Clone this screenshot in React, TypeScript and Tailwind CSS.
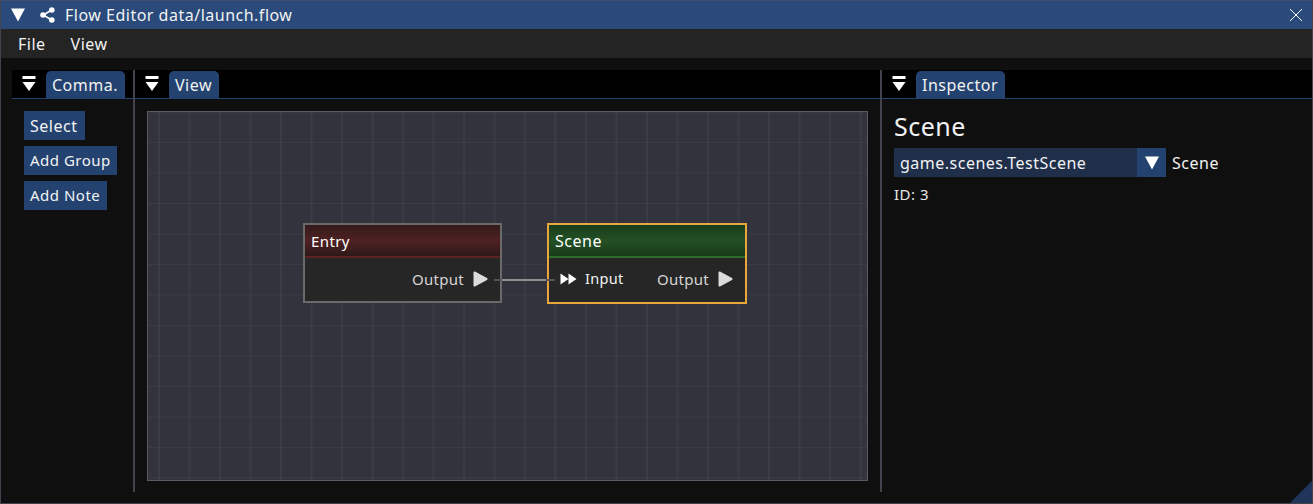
import React from "react";

const Tri = ({ className = "" }: { className?: string }) => (
  <svg width="16" height="14" viewBox="0 0 16 14" className={className}>
    <path d="M1 0.5 L15 0.5 L8 13.5 Z" fill="#fff" />
  </svg>
);

const DockMenu = () => (
  <svg width="14" height="16" viewBox="0 0 14 16" className="shrink-0">
    <rect x="0.5" y="0" width="13" height="3" fill="#fff" />
    <path d="M0.5 6 L13.5 6 L7 15 Z" fill="#fff" />
  </svg>
);

const Play = () => (
  <svg width="15" height="16" viewBox="0 0 15 16">
    <path d="M1.5 1.5 L13.5 8 L1.5 14.5 Z" fill="#dcdcdc" stroke="#dcdcdc" strokeWidth="2" strokeLinejoin="round" />
  </svg>
);

const DoublePlay = () => (
  <svg width="17" height="12" viewBox="0 0 17 12">
    <path d="M0.5 0.5 L8.5 6 L0.5 11.5 Z M8.5 0.5 L16.5 6 L8.5 11.5 Z" fill="#fff" />
  </svg>
);

const Share = () => (
  <svg width="15" height="16" viewBox="0 0 15 16">
    <path d="M11.5 3 L3.5 8 L11.5 13" stroke="#fff" strokeWidth="1.6" fill="none" />
    <circle cx="11.8" cy="3" r="2.8" fill="#fff" />
    <circle cx="3" cy="8" r="2.8" fill="#fff" />
    <circle cx="11.8" cy="13" r="2.8" fill="#fff" />
  </svg>
);

const Tab = ({ label }: { label: string }) => (
  <div className="flex h-[28px] items-center gap-[10px] pl-[10px]">
    <DockMenu />
    <div className="flex h-[27px] items-center rounded-t-[5px] bg-[#23426f] pl-[6px] pr-[7px] pt-[1px] text-[#f2f2f2]">
      {label}
    </div>
  </div>
);

const Panel = ({ label, className, children }: { label: string; className: string; children: React.ReactNode }) => (
  <div className={className}>
    <div className="border-b border-[#23426f] bg-black">
      <Tab label={label} />
    </div>
    {children}
  </div>
);

const Splitter = () => <div className="mb-[11px] mt-[12px] w-[2px] shrink-0 bg-[#43434d]" />;

const CmdButton = ({ label, className = "" }: { label: string; className?: string }) => (
  <div className={`flex h-[29px] items-center bg-[#23426f] pl-[6px] text-[#f2f2f2] ${className}`}>{label}</div>
);

const Row = ({ left }: { left?: boolean }) => (
  <div className="flex h-[42px] items-center justify-between pl-[11px] pr-[12px] text-[15px] tracking-[0.3px] text-[#d4d4d4]">
    {left ? (
      <div className="flex items-center gap-[8px] text-[#f2f2f2]">
        <DoublePlay />
        <span className="text-[14.5px]">Input</span>
      </div>
    ) : (
      <span />
    )}
    <div className="flex items-center gap-[9px]">
      <span>Output</span>
      <Play />
    </div>
  </div>
);

export default function App() {
  return (
    <div className="relative flex h-[504px] w-[1313px] flex-col overflow-hidden border border-[#43434d] border-t-[#3f4d6e] bg-[#0f0f0f] font-['Noto_Sans',sans-serif] text-[16px] tracking-[0.5px] text-[#f2f2f2]">
      <div className="flex h-[28px] shrink-0 items-center bg-[#294a7a] pl-[9px] pr-[8px]">
        <Tri />
        <div className="ml-[14px]">
          <Share />
        </div>
        <span className="ml-[10px]">Flow Editor data/launch.flow</span>
        <svg width="14" height="14" viewBox="0 0 14 14" className="ml-auto mr-[1px]">
          <path d="M1 1 L13 13 M13 1 L1 13" stroke="#fff" strokeWidth="1" />
        </svg>
      </div>
      <div className="flex h-[29px] shrink-0 items-center gap-[25px] bg-[#242424] pl-[17px] pt-[1px]">
        <span>File</span>
        <span>View</span>
      </div>
      <div className="flex min-h-0 flex-1">
        <Panel label="Comma." className="ml-[11px] mt-[12px] w-[121px] shrink-0">
          <div className="flex flex-col gap-[6px] pl-[12px] pt-[12px]">
            <CmdButton label="Select" className="w-[61px]" />
            <CmdButton label="Add Group" className="w-[93px] text-[15px]" />
            <CmdButton label="Add Note" className="w-[83px] text-[15px]" />
          </div>
        </Panel>
        <Splitter />
        <Panel label="View" className="mt-[12px] w-[745px] shrink-0">
          <div className="relative ml-[12px] mt-[12px] h-[370px] w-[721px] border border-[#5a5a64] bg-[#32333c] bg-[linear-gradient(90deg,rgba(200,200,200,0.055)_2px,transparent_2px),linear-gradient(rgba(200,200,200,0.055)_1px,transparent_1px)] bg-[size:30.5px_30.5px] bg-[position:10px_30px]">
            <div className="absolute left-[155px] top-[111px] h-[80px] w-[199px] border-2 border-[#6a6a6a] bg-[#262626]">
              <div className="flex h-[33px] items-center border-b-2 border-[#5c2325] bg-[linear-gradient(#331a1b,#4f2122_50%,#2f1819)] pl-[6px] pt-[1px] text-[15px] tracking-[0.4px] text-white">
                Entry
              </div>
              <Row />
            </div>
            <div className="absolute left-[399px] top-[111px] h-[81px] w-[200px] border-2 border-[#e9a63c] bg-[#262626]">
              <div className="flex h-[33px] items-center border-b-2 border-[#2f6b2b] bg-[linear-gradient(#193d1b,#245025_50%,#173a19)] pl-[6px] pt-[1px] text-white">
                Scene
              </div>
              <Row left />
            </div>
            <div className="absolute left-[346px] top-[167px] h-[2px] w-[61px] bg-[linear-gradient(90deg,#555_0,#555_8px,#8f8f8f_8px,#8f8f8f_52px,#555_52px)]" />
          </div>
        </Panel>
        <Splitter />
        <Panel label="Inspector" className="mt-[12px] min-w-0 flex-1">
          <div className="pl-[12px] pt-[10px]">
            <div className="text-[25px] leading-[34px]">Scene</div>
            <div className="mt-[5px] flex items-center">
              <div className="flex h-[29px] w-[272px] items-center bg-[#1f2f4a]">
                <span className="flex-1 pl-[6px]">game.scenes.TestScene</span>
                <div className="flex h-[29px] w-[29px] items-center justify-center bg-[#23426f]">
                  <Tri />
                </div>
              </div>
              <span className="ml-[6px]">Scene</span>
            </div>
            <div className="mt-[6px] text-[15px] text-[#e6e6e6]">ID: 3</div>
          </div>
        </Panel>
      </div>
      <div className="absolute bottom-0 right-0 h-[22px] w-[22px] bg-[#1f365a] [clip-path:polygon(100%_0,100%_100%,0_100%)]" />
    </div>
  );
}
